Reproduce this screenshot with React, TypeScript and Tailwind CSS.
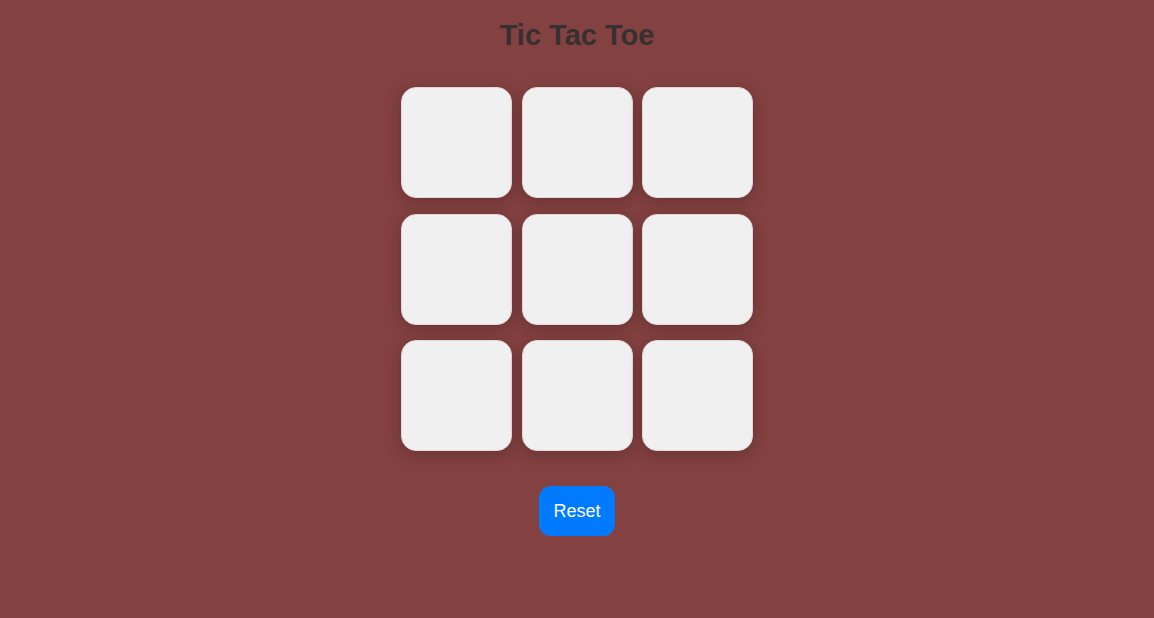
import React from "react";

export default function App() {
  const cells = Array.from({ length: 9 });
  return (
    <div className="min-h-screen w-full bg-[#844141] flex flex-col items-center" style={{ fontFamily: '"Liberation Sans", Arial, sans-serif' }}>
      <h1 className="mt-[19px] text-[29px] leading-[32px] font-bold text-[#363030]">Tic Tac Toe</h1>
      <div className="mt-[36px] grid grid-cols-[111px_111px_111px] gap-x-[9.5px] gap-y-[15.5px]">
        {cells.map((_, i) => (
          <button
            key={i}
            className="w-[111px] h-[111px] rounded-[15px] bg-[#f0f0f0] border border-[#e4d6d6] shadow-[0_4px_16px_rgba(0,0,0,0.22)]"
          />
        ))}
      </div>
      <button className="mt-[35px] h-[50px] w-[76px] rounded-[12px] bg-[#007bff] text-white text-[18px] leading-[21px]">
        Reset
      </button>
    </div>
  );
}
